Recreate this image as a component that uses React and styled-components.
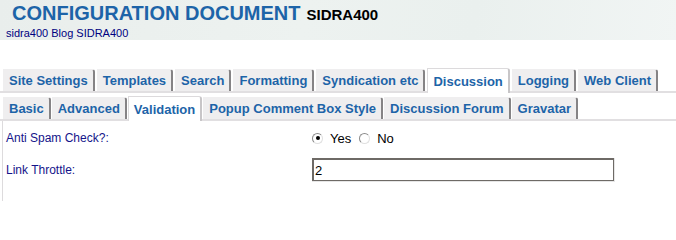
import React, { useState } from 'react';
import styled, { createGlobalStyle } from 'styled-components';

const GlobalStyle = createGlobalStyle`
  body {
    margin: 0;
    background: #fff;
    font-family: "Liberation Sans", Arial, sans-serif;
  }
`;

const Page = styled.div`
  width: 676px;
  height: 201px;
  overflow: hidden;
`;

const Banner = styled.div`
  height: 40px;
  padding: 3px 0 0 6px;
  box-sizing: border-box;
  background: linear-gradient(100deg, #e9eeec 0%, #edf2f0 45%, #eaf0ee 70%, #f1f5f4 100%);
`;

const TitleLine = styled.div`
  display: flex;
  align-items: baseline;
  padding-left: 6px;
  height: 22px;
`;

const Title = styled.span`
  font-size: 20px;
  font-weight: bold;
  color: #1d64a8;
  line-height: 20px;
`;

const SubTitle = styled.span`
  font-size: 15px;
  font-weight: bold;
  color: #000;
  margin-left: 6px;
`;

const BlogLine = styled.div`
  font-size: 11px;
  color: #000080;
  margin-top: 2px;
`;

const TabStrip = styled.div`
  display: flex;
  align-items: flex-end;
  gap: ${p => p.$gap}px;
  padding-left: 3px;
  margin-top: ${p => p.$top}px;
  border-bottom: 2px solid #e1dfe1;
`;

const Tab = styled.div`
  font-size: 13px;
  font-weight: bold;
  color: #1d64a8;
  height: ${p => (p.$active ? 24 : 21)}px;
  line-height: ${p => (p.$active ? 25 : 22)}px;
  padding: 0 ${p => p.$pad}px;
  background: ${p => (p.$active ? '#fff' : '#efeeef')};
  border-right: 2px solid ${p => (p.$active ? '#c8c6c8' : '#858385')};
  border-top: 1px solid ${p => (p.$active ? '#dcdadc' : '#efeeef')};
  border-left: 1px solid ${p => (p.$active ? '#dcdadc' : '#efeeef')};
  border-top-right-radius: 3px;
  margin-bottom: ${p => (p.$active ? -2 : 0)}px;
  white-space: nowrap;
`;

const Body = styled.div`
  border-left: 1px solid #dddbdd;
  margin-left: 2px;
  padding: 3px 0 40px 3px;
`;

const Row = styled.div`
  display: grid;
  grid-template-columns: 306px 1fr;
  align-items: center;
  height: ${p => p.$h}px;
`;

const Label = styled.div`
  font-size: 12px;
  color: #14148a;
`;

const Radios = styled.div`
  display: flex;
  align-items: center;
  font-size: 13px;
  color: #000;
`;

const Radio = styled.span`
  width: 11px;
  height: 11px;
  border-radius: 50%;
  box-sizing: border-box;
  border: 1px solid #8a8a8a;
  border-right-color: #e0e0e0;
  border-bottom-color: #e0e0e0;
  background: #fff;
  display: inline-flex;
  align-items: center;
  justify-content: center;
  margin-right: 7px;
  &::after {
    content: '';
    width: 4px;
    height: 4px;
    border-radius: 50%;
    background: ${p => (p.$checked ? '#000' : 'transparent')};
  }
`;

const RadioText = styled.span`
  margin-right: 8px;
`;

const InputWrap = styled.div`
  width: 303px;
  border: 1px solid #e6e6e6;
  border-top: none;
  border-left: none;
  box-sizing: border-box;
`;

const Input = styled.input`
  width: 302px;
  height: 23px;
  box-sizing: border-box;
  border: 2px solid #6e6a66;
  border-right-width: 1px;
  border-bottom-width: 1px;
  font-family: "Liberation Sans", Arial, sans-serif;
  font-size: 13px;
  padding: 0 1px;
  outline: none;
  display: block;
`;

const mainTabs = ['Site Settings', 'Templates', 'Search', 'Formatting', 'Syndication etc', 'Discussion', 'Logging', 'Web Client'];
const subTabs = ['Basic', 'Advanced', 'Validation', 'Popup Comment Box Style', 'Discussion Forum', 'Gravatar'];

export default function App() {
  const [spam, setSpam] = useState(true);
  const [throttle, setThrottle] = useState('2');

  return (
    <Page>
      <GlobalStyle />
      <Banner>
        <TitleLine>
          <Title>CONFIGURATION DOCUMENT</Title>
          <SubTitle>SIDRA400</SubTitle>
        </TitleLine>
        <BlogLine>sidra400 Blog SIDRA400</BlogLine>
      </Banner>

      <TabStrip $gap={2} $top={28}>
        {mainTabs.map(t => (
          <Tab key={t} $pad={5} $active={t === 'Discussion'}>{t}</Tab>
        ))}
      </TabStrip>

      <TabStrip $gap={1} $top={3}>
        {subTabs.map(t => (
          <Tab key={t} $pad={5} $active={t === 'Validation'}>{t}</Tab>
        ))}
      </TabStrip>

      <Body>
        <Row $h={28}>
          <Label>Anti Spam Check?:</Label>
          <Radios>
            <Radio $checked={spam} onClick={() => setSpam(true)} />
            <RadioText>Yes</RadioText>
            <Radio $checked={!spam} onClick={() => setSpam(false)} />
            <RadioText>No</RadioText>
          </Radios>
        </Row>
        <Row $h={36}>
          <Label>Link Throttle:</Label>
          <InputWrap>
            <Input value={throttle} onChange={e => setThrottle(e.target.value)} />
          </InputWrap>
        </Row>
      </Body>
    </Page>
  );
}
